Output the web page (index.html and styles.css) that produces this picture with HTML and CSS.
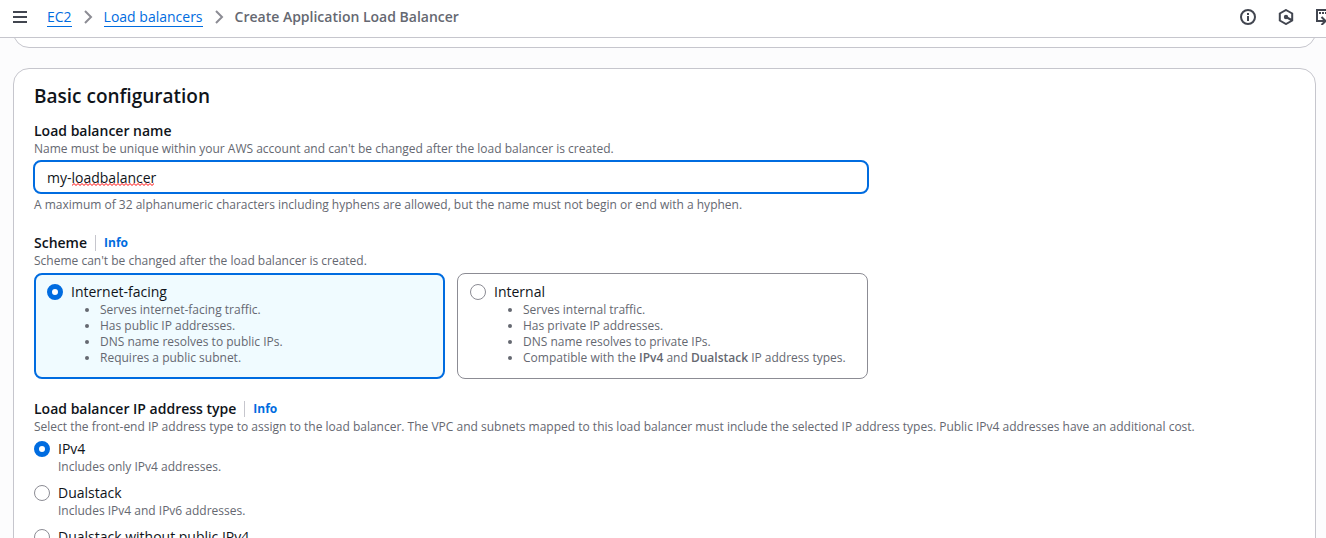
FILE: index.html
```html
<!DOCTYPE html>
<html lang="en">
<head>
<meta charset="utf-8">
<meta name="viewport" content="width=device-width, initial-scale=1">
<title>Create Application Load Balancer</title>
<link rel="stylesheet" href="styles.css">
</head>
<body>
<header class="topbar">
  <button class="icon-button" type="button" aria-label="Open navigation">
    <svg width="16" height="16" viewBox="0 0 16 16"><path d="M1 3h14M1 8h14M1 13h14"/></svg>
  </button>
  <nav class="breadcrumbs" aria-label="Breadcrumbs">
    <a href="#">EC2</a>
    <svg class="chevron" width="16" height="16" viewBox="0 0 16 16"><path d="m5 2 6 6-6 6"/></svg>
    <a href="#">Load balancers</a>
    <svg class="chevron" width="16" height="16" viewBox="0 0 16 16"><path d="m5 2 6 6-6 6"/></svg>
    <span class="current">Create Application Load Balancer</span>
  </nav>
  <div class="tools">
    <button class="icon-button" type="button" aria-label="Information">
      <svg width="16" height="16" viewBox="0 0 16 16"><circle cx="8" cy="8" r="7"/><path d="M8 7v5M8 4v2"/></svg>
    </button>
    <button class="icon-button" type="button" aria-label="Amazon Q">
      <svg width="16" height="16" viewBox="0 0 16 16"><path d="m8 1 6.200 3.500v7L8 15l-6.200-3.500v-7zM8 8l5.500 3"/><circle class="solid" cx="8" cy="8" r="2.200"/></svg>
    </button>
    <button class="icon-button" type="button" aria-label="Tutorials">
      <svg width="16" height="16" viewBox="0 0 16 16"><path d="M15 8V1H1v11h8M5.500 8l4 4-4 4"/><path d="M3 4h11" stroke-dasharray="2 1"/></svg>
    </button>
  </div>
</header>
<main class="page">
  <div class="card previous"></div>
  <section class="card">
    <h2>Basic configuration</h2>
    <div class="field">
      <label class="title" for="name">Load balancer name</label>
      <p>Name must be unique within your AWS account and can't be changed after the load balancer is created.</p>
      <div class="name-box">
        <input id="name" type="text" value="my-loadbalancer" spellcheck="false">
        <svg class="squiggle" width="82" height="3" aria-hidden="true"><defs><pattern id="wave" width="4" height="3" patternUnits="userSpaceOnUse"><path d="M-1 1.500 0 2.500 2 .5 4 2.500 5 1.500"/></pattern></defs><rect width="82" height="3" fill="url(#wave)" stroke="none"/></svg>
      </div>
      <p>A maximum of 32 alphanumeric characters including hyphens are allowed, but the name must not begin or end with a hyphen.</p>
    </div>
    <div class="field" role="radiogroup" aria-labelledby="scheme-title">
      <div class="title-row"><span class="title" id="scheme-title">Scheme</span><a class="info" href="#">Info</a></div>
      <p>Scheme can't be changed after the load balancer is created.</p>
      <div class="tiles">
        <div class="tile selected">
          <input type="radio" name="scheme" id="internet" checked>
          <div>
            <label for="internet">Internet-facing</label>
            <ul>
              <li>Serves internet-facing traffic.</li>
              <li>Has public IP addresses.</li>
              <li>DNS name resolves to public IPs.</li>
              <li>Requires a public subnet.</li>
            </ul>
          </div>
        </div>
        <div class="tile">
          <input type="radio" name="scheme" id="internal">
          <div>
            <label for="internal">Internal</label>
            <ul>
              <li>Serves internal traffic.</li>
              <li>Has private IP addresses.</li>
              <li>DNS name resolves to private IPs.</li>
              <li>Compatible with the <b>IPv4</b> and <b>Dualstack</b> IP address types.</li>
            </ul>
          </div>
        </div>
      </div>
    </div>
    <div class="field" role="radiogroup" aria-labelledby="type-title">
      <div class="title-row"><span class="title" id="type-title">Load balancer IP address type</span><a class="info" href="#">Info</a></div>
      <p>Select the front-end IP address type to assign to the load balancer. The VPC and subnets mapped to this load balancer must include the selected IP address types. Public IPv4 addresses have an additional cost.</p>
      <div class="options">
        <div class="option">
          <input type="radio" name="type" id="ipv4" checked>
          <div><label for="ipv4">IPv4</label><p>Includes only IPv4 addresses.</p></div>
        </div>
        <div class="option">
          <input type="radio" name="type" id="dual">
          <div><label for="dual">Dualstack</label><p>Includes IPv4 and IPv6 addresses.</p></div>
        </div>
        <div class="option">
          <input type="radio" name="type" id="dual-private">
          <div><label for="dual-private">Dualstack without public IPv4</label></div>
        </div>
      </div>
    </div>
  </section>
</main>
</body>
</html>
```
FILE: styles.css
```css
* { box-sizing: border-box; }
body {
  margin: 0;
  height: 100vh;
  display: flex;
  flex-direction: column;
  overflow: hidden;
  background: #fcfcfd;
  color: #0f141a;
  font: 14px/20px "Open Sans", "Noto Sans", sans-serif;
}
h2, p, ul { margin: 0; }
svg { display: block; }
a { color: #006ce0; text-decoration: none; }
b { font-weight: 600; }
.topbar {
  flex: none;
  display: flex;
  align-items: center;
  height: 38px;
  padding: 0 0 4px 12px;
  overflow: hidden;
  background: #fff;
  border-bottom: 1px solid #c6c6cd;
}
.icon-button {
  padding: 0;
  border: 0;
  background: none;
}
.icon-button svg, .chevron {
  fill: none;
  stroke: #424650;
  stroke-width: 2;
}
.icon-button .solid { fill: #424650; stroke: none; }
.breadcrumbs {
  display: flex;
  align-items: center;
  gap: 8px;
  margin-left: 19px;
  white-space: nowrap;
}
.breadcrumbs a { border-bottom: 1px solid #006ce0; padding-top: 1px; line-height: 18px; }
.breadcrumbs .chevron { stroke: #8c8c94; }
.current { color: #656871; font-weight: 600; }
.tools {
  display: flex;
  gap: 22px;
  margin-left: auto;
  margin-right: -6px;
}
.page { flex: 1; min-height: 0; padding: 0 10px 0 13px; overflow: hidden; }
.card {
  padding: 15px 20px 20px;
  background: #fff;
  border: 1px solid #c6c6cd;
  border-radius: 16px;
}
.card.previous {
  height: 40px;
  margin-top: -30px;
  margin-bottom: 20px;
}
h2 { font-size: 19px; line-height: 24px; font-weight: 600; }
.field { margin-top: 20px; }
h2 + .field { margin-top: 13px; }
.title { display: block; font-weight: 600; }
p, ul { color: #656871; font-size: 12px; line-height: 16px; }
.name-box { position: relative; max-width: 836px; margin: 3px 0 3px -1px; }
.name-box input {
  display: block;
  width: 100%;
  height: 34px;
  padding: 0 12px;
  border: 2px solid #006ce0;
  border-radius: 8px;
  outline: 0;
  background: #fff;
  color: inherit;
  font: inherit;
}
.squiggle { position: absolute; left: 39px; top: 23px; fill: none; stroke: #f00; }
.title-row { display: flex; align-items: center; }
.info {
  margin-left: 8px;
  padding-left: 8px;
  border-left: 1px solid #c6c6cd;
  font-size: 12px;
  line-height: 16px;
  font-weight: 700;
}
.tiles {
  display: grid;
  grid-template-columns: 1fr 1fr;
  gap: 12px;
  max-width: 834px;
  margin-top: 4px;
}
.tile {
  display: flex;
  gap: 8px;
  min-height: 106px;
  padding: 8px 12px;
  border: 1px solid #8c8c94;
  border-radius: 8px;
}
.tile.selected { padding: 7px 11px; border: 2px solid #006ce0; background: #f0fbff; }
.tile label, .option label { display: block; }
ul { padding-left: 29px; }
input[type="radio"] {
  appearance: none;
  flex: none;
  width: 16px;
  height: 16px;
  margin: 2px 0;
  border: 1px solid #8c8c94;
  border-radius: 50%;
  background: #fff;
}
input[type="radio"]:checked { border: 5px solid #006ce0; }
.options { display: grid; gap: 8px; margin-top: 4px; }
.option { display: flex; gap: 8px; }
```
